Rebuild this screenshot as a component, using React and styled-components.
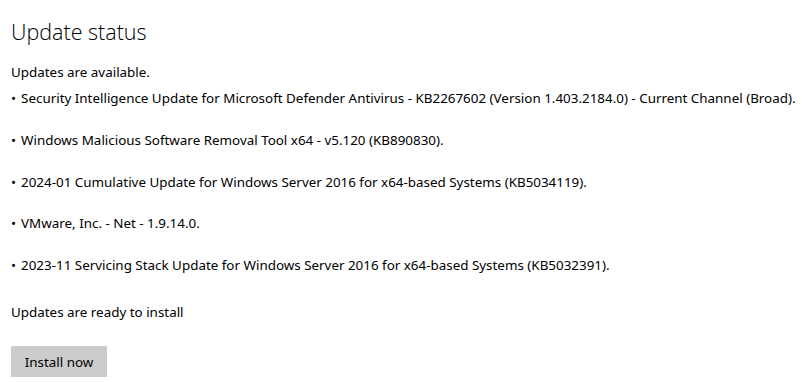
import React from 'react';
import styled, { createGlobalStyle } from 'styled-components';

const GlobalStyle = createGlobalStyle`
  html, body {
    margin: 0;
    padding: 0;
    background: #ffffff;
  }
  body {
    font-family: 'Noto Sans', 'Open Sans', sans-serif;
    color: #000000;
  }
`;

const Page = styled.div`
  padding: 18px 11px 0;
  display: flex;
  flex-direction: column;
  align-items: flex-start;
`;

const Title = styled.h1`
  margin: 0;
  font-family: 'Open Sans', 'Noto Sans', sans-serif;
  font-size: 21.5px;
  font-weight: 300;
  line-height: 27px;
  color: #000;
`;

const Text = styled.p`
  margin: ${({ top }) => top || 0}px 0 0;
  font-size: 13.4px;
  line-height: 20px;
  white-space: nowrap;
`;

const List = styled.ul`
  list-style: none;
  margin: 6px 0 0;
  padding: 0;
  display: flex;
  flex-direction: column;
  gap: 21.8px;
`;

const Item = styled.li`
  font-size: 13.4px;
  line-height: 20px;
  white-space: nowrap;

  &::before {
    content: '•';
    margin-right: 5px;
  }
`;

const Button = styled.button`
  margin-top: 24px;
  width: 96px;
  height: 31px;
  border: none;
  background: #cccccc;
  font-family: inherit;
  font-size: 13.4px;
  color: #000;
  padding: 0;
`;

const updates = [
  'Security Intelligence Update for Microsoft Defender Antivirus - KB2267602 (Version 1.403.2184.0) - Current Channel (Broad).',
  'Windows Malicious Software Removal Tool x64 - v5.120 (KB890830).',
  '2024-01 Cumulative Update for Windows Server 2016 for x64-based Systems (KB5034119).',
  'VMware, Inc. - Net - 1.9.14.0.',
  '2023-11 Servicing Stack Update for Windows Server 2016 for x64-based Systems (KB5032391).',
];

const App = () => (
  <>
    <GlobalStyle />
    <Page>
      <Title>Update status</Title>
      <Text top={17}>Updates are available.</Text>
      <List>
        {updates.map((u) => (
          <Item key={u}>{u}</Item>
        ))}
      </List>
      <Text top={27}>Updates are ready to install</Text>
      <Button>Install now</Button>
    </Page>
  </>
);

export default App;
